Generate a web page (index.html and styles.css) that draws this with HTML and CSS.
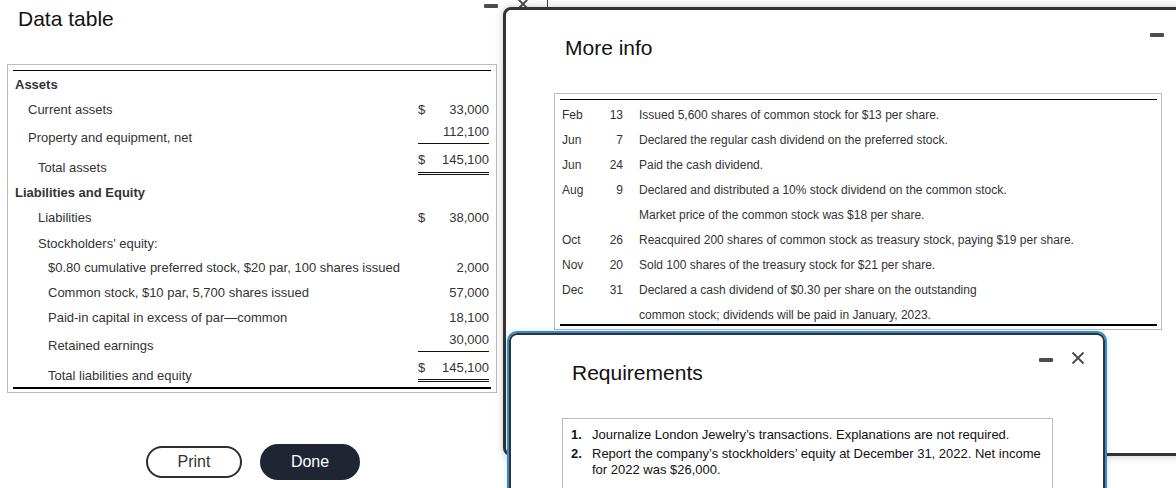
FILE: index.html
```html
<!DOCTYPE html>
<html lang="en">
<head>
<meta charset="utf-8">
<title>Data table</title>
<link rel="stylesheet" href="styles.css">
</head>
<body>
<div class="desk">

  <section class="win win-dt">
    <header class="win-head">
      <h1 class="win-title">Data table</h1>
      <div class="win-ctrls">
        <span class="ctrl-min"></span>
        <svg class="ctrl-x" viewBox="0 0 14 14" width="14" height="14"><path d="M1.5 1.5 L12.5 12.5 M12.5 1.5 L1.5 12.5"/></svg>
      </div>
    </header>
    <div class="box dt-box">
      <div class="bs">
        <div class="row r-head"><div class="lbl l0 b">Assets</div></div>
        <div class="row r-std"><div class="lbl l1">Current assets</div><div class="amt a-mid"><span>$</span><span>33,000</span></div></div>
        <div class="row r-under"><div class="lbl l1">Property and equipment, net</div><div class="amt a-top u1"><span></span><span>112,100</span></div></div>
        <div class="row r-total"><div class="lbl l2">Total assets</div><div class="amt a-top u2"><span>$</span><span>145,100</span></div></div>
        <div class="row r-std"><div class="lbl l0 b">Liabilities and Equity</div></div>
        <div class="row r-std"><div class="lbl l2">Liabilities</div><div class="amt a-mid"><span>$</span><span>38,000</span></div></div>
        <div class="row r-sub"><div class="lbl l2">Stockholders' equity:</div></div>
        <div class="row r-tight"><div class="lbl l3">$0.80 cumulative preferred stock, $20 par, 100 shares issued</div><div class="amt a-7"><span></span><span>2,000</span></div></div>
        <div class="row r-std"><div class="lbl l3">Common stock, $10 par, 5,700 shares issued</div><div class="amt a-mid"><span></span><span>57,000</span></div></div>
        <div class="row r-std"><div class="lbl l3">Paid-in capital in excess of par—common</div><div class="amt a-mid"><span></span><span>18,100</span></div></div>
        <div class="row r-under"><div class="lbl l3">Retained earnings</div><div class="amt a-top u1"><span></span><span>30,000</span></div></div>
        <div class="row r-grand"><div class="lbl l3 lift">Total liabilities and equity</div><div class="amt a-top u2 u2-tight"><span>$</span><span>145,100</span></div></div>
      </div>
    </div>
    <div class="btns">
      <button class="btn btn-print">Print</button>
      <button class="btn btn-done">Done</button>
    </div>
  </section>

  <section class="win win-mi">
    <header class="win-head">
      <h2 class="win-title">More info</h2>
      <div class="win-ctrls">
        <span class="ctrl-min"></span>
        <svg class="ctrl-x" viewBox="0 0 14 14" width="14" height="14"><path d="M1.5 1.5 L12.5 12.5 M12.5 1.5 L1.5 12.5"/></svg>
      </div>
    </header>
    <div class="box mi-box">
      <div class="mi-tbl">
        <div class="mi-row"><span class="mo">Feb</span><span class="dy">13</span><span class="ds">Issued 5,600 shares of common stock for $13 per share.</span></div>
        <div class="mi-row"><span class="mo">Jun</span><span class="dy">7</span><span class="ds">Declared the regular cash dividend on the preferred stock.</span></div>
        <div class="mi-row"><span class="mo">Jun</span><span class="dy">24</span><span class="ds">Paid the cash dividend.</span></div>
        <div class="mi-row"><span class="mo">Aug</span><span class="dy">9</span><span class="ds">Declared and distributed a 10% stock dividend on the common stock.</span></div>
        <div class="mi-row"><span class="mo"></span><span class="dy"></span><span class="ds">Market price of the common stock was $18 per share.</span></div>
        <div class="mi-row"><span class="mo">Oct</span><span class="dy">26</span><span class="ds">Reacquired 200 shares of common stock as treasury stock, paying $19 per share.</span></div>
        <div class="mi-row"><span class="mo">Nov</span><span class="dy">20</span><span class="ds">Sold 100 shares of the treasury stock for $21 per share.</span></div>
        <div class="mi-row"><span class="mo">Dec</span><span class="dy">31</span><span class="ds">Declared a cash dividend of $0.30 per share on the outstanding</span></div>
        <div class="mi-row"><span class="mo"></span><span class="dy"></span><span class="ds">common stock; dividends will be paid in January, 2023.</span></div>
      </div>
    </div>
  </section>

  <section class="win win-rq">
    <header class="win-head">
      <h2 class="win-title">Requirements</h2>
      <div class="win-ctrls">
        <span class="ctrl-min"></span>
        <svg class="ctrl-x" viewBox="0 0 14 14" width="14" height="14"><path d="M1.5 1.5 L12.5 12.5 M12.5 1.5 L1.5 12.5"/></svg>
      </div>
    </header>
    <div class="box rq-box">
      <div class="rq-item"><span class="rq-num">1.</span><span class="rq-txt">Journalize London Jewelry’s transactions. Explanations are not required.</span></div>
      <div class="rq-item"><span class="rq-num">2.</span><span class="rq-txt">Report the company’s stockholders’ equity at December 31, 2022. Net income for 2022 was $26,000.</span></div>
    </div>
  </section>

</div>
</body>
</html>
```

FILE: styles.css
```css
* { box-sizing: border-box; }

html, body {
  margin: 0;
  padding: 0;
  background: #fff;
}

body {
  font-family: "Liberation Sans", Arial, sans-serif;
  color: #333;
}

.desk {
  position: relative;
  width: 1176px;
  height: 488px;
  overflow: hidden;
  background: #fff;
}

/* ---------- windows ---------- */
.win {
  position: absolute;
  background: #fff;
}

.win-head {
  display: flex;
  align-items: flex-start;
}

.win-title {
  margin: 10px 0 0 0;
  font-size: 21px;
  line-height: 24px;
  font-weight: normal;
  color: #111;
}

.win-ctrls {
  margin-left: auto;
  display: flex;
  align-items: flex-start;
  gap: 18px;
}

.ctrl-min {
  display: block;
  width: 14px;
  height: 4px;
  margin-top: 7px;
  background: #4d4d4d;
  border-radius: 1px;
}

.ctrl-x {
  display: block;
  fill: none;
  stroke: #4a4a4a;
  stroke-width: 1.8;
}

/* data table window */
.win-dt {
  left: -30px;
  top: -33px;
  width: 578px;
  height: 560px;
  border: 1px solid #444;
  z-index: 1;
}

.win-dt .win-head {
  padding: 29px 17px 0 47px;
}

.box {
  border: 1px solid #bbb;
  background: #fff;
}

.dt-box {
  margin: 33px 0 0 36px;
  width: 490px;
  padding: 5px 5px 3px 5px;
  font-size: 13px;
}

.bs {
  border-top: 1px solid #000;
  border-bottom: 2px solid #000;
}

.row {
  display: flex;
}

.r-head { height: 23px; }
.r-std { height: 25px; }
.r-under { height: 28px; }
.r-total { height: 30px; }
.r-sub { height: 26px; }
.r-tight { height: 24px; }
.r-grand { height: 32px; }

.lbl {
  flex: 1;
  align-self: flex-end;
  line-height: 16px;
  padding-bottom: 1px;
  white-space: nowrap;
}

.lbl.lift { padding-bottom: 3px; }

.l0 { padding-left: 2px; }
.l1 { padding-left: 15px; }
.l2 { padding-left: 25px; }
.l3 { padding-left: 35px; }
.b { font-weight: bold; }

.amt {
  width: 71px;
  margin-right: 2px;
  display: flex;
  justify-content: space-between;
  align-self: flex-start;
  line-height: 16px;
}

.a-mid { margin-top: 8px; }
.a-7 { margin-top: 7px; }
.a-top { margin-top: 5px; }

.u1 {
  padding-bottom: 3px;
  border-bottom: 1px solid #111;
}

.u2 {
  padding-bottom: 4px;
  border-bottom: 3px double #111;
}

.u2-tight { padding-bottom: 3px; }

.btns {
  display: flex;
  align-items: center;
  gap: 18px;
  margin: 51px 0 0 175px;
}

.btn {
  font-family: "Liberation Sans", Arial, sans-serif;
  font-size: 16px;
  cursor: pointer;
  padding: 0;
}

.btn-print {
  width: 96px;
  height: 32px;
  border: 2px solid #2e2e2e;
  border-radius: 16px;
  background: #fff;
  color: #333;
}

.btn-done {
  width: 100px;
  height: 36px;
  border: none;
  border-radius: 18px;
  background: #1f2532;
  color: #fff;
}

/* more info window */
.win-mi {
  left: 503px;
  top: 7px;
  width: 714px;
  height: 449px;
  border: 3px solid #333;
  border-radius: 8px;
  box-shadow: 0 0 8px rgba(0, 0, 0, 0.22);
  z-index: 2;
}

.win-mi .win-head {
  padding: 16px 18px 0 59px;
}

.mi-box {
  margin: 33px 0 0 48px;
  width: 608px;
  padding: 5px 4px 3px 5px;
  font-size: 12px;
}

.mi-tbl {
  border-top: 1px solid #000;
  border-bottom: 2px solid #000;
  padding-top: 2px;
}

.mi-row {
  display: flex;
  line-height: 16px;
  padding: 5px 0 4px 0;
  white-space: nowrap;
}

.mi-row:last-child { padding-bottom: 1px; }

.mo {
  width: 40px;
  padding-left: 2px;
}

.dy {
  width: 23px;
  text-align: right;
}

.ds {
  margin-left: 16px;
}

/* requirements window */
.win-rq {
  left: 509px;
  top: 333px;
  width: 596px;
  height: 300px;
  border: 2px solid #333;
  outline: 2px solid #2a8fd6;
  border-radius: 8px;
  box-shadow: 0 0 8px rgba(0, 0, 0, 0.2);
  z-index: 3;
}

.win-rq .win-head {
  padding: 16px 18px 0 61px;
}

.rq-box {
  margin: 33px 0 0 51px;
  width: 491px;
  padding: 8px 6px 10px 8px;
  font-size: 13px;
  color: #111;
}

.rq-item {
  display: flex;
  line-height: 16px;
}

.rq-item + .rq-item { margin-top: 3px; }

.rq-num {
  flex: 0 0 21px;
  font-weight: bold;
}

.rq-txt { flex: 1; }
```
